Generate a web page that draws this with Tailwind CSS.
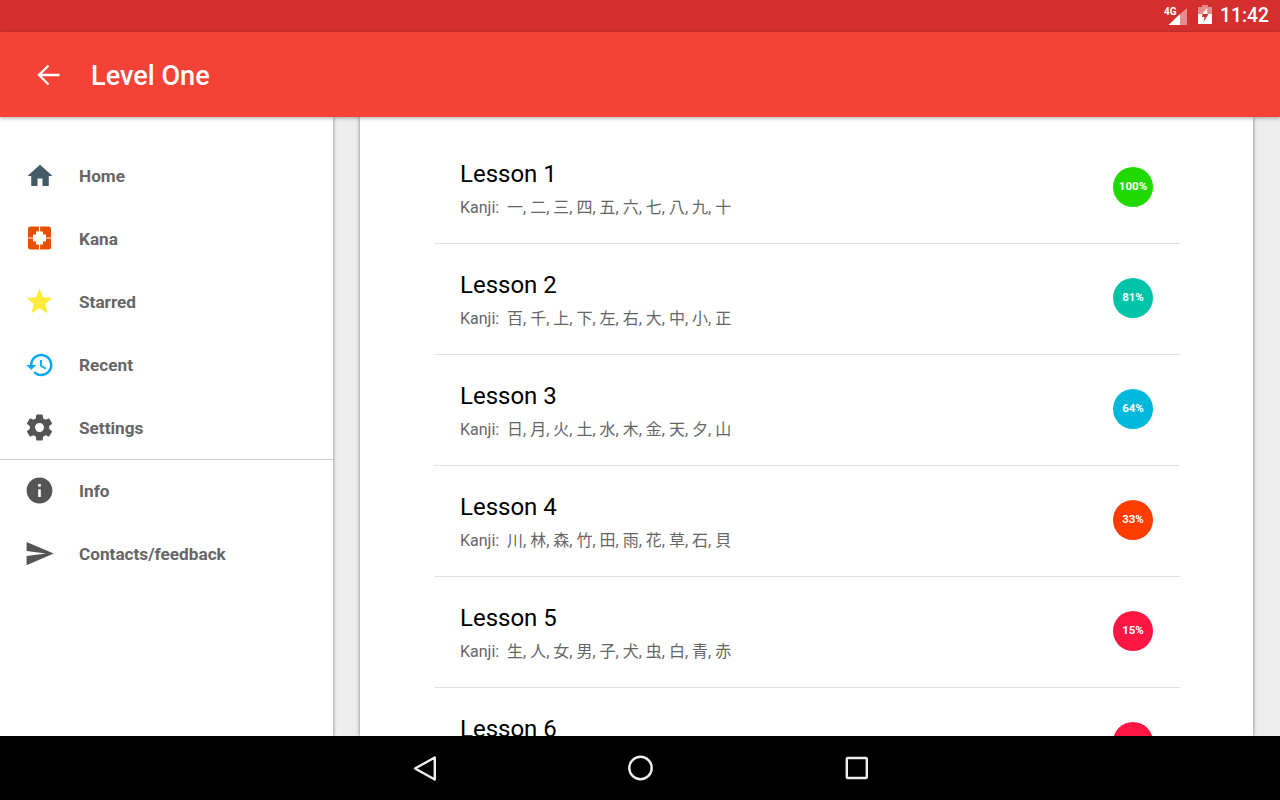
<!DOCTYPE html>
<html lang="en">

<head>
    <meta charset="UTF-8">
    <meta name="viewport" content="width=device-width, initial-scale=1.0">
    <title>Level One</title>
    <script src="https://cdn.jsdelivr.net/npm/@tailwindcss/browser@4"></script>
</head>

<body class="font-['Roboto','Noto_Sans_CJK_JP',sans-serif]">
    <div class="w-[1280px] h-[800px] flex flex-col overflow-hidden bg-[#eeeeee]">
        <!-- status bar -->
        <div class="h-8 shrink-0 bg-[#d32f2f] flex items-center justify-end pr-[11px] text-white">
            <svg class="w-[26px] h-[32px] mr-[9px]" viewBox="0 0 26 32">
                <text x="2" y="15" font-size="10" font-weight="700" fill="#fff" font-family="Roboto">4G</text>
                <path d="M6.500 25 L18 25 L18 14z" fill="#fff" />
                <path d="M18 25 L25 25 L25 8 L18 14z" fill="#fff" fill-opacity="0.45" />
            </svg>
            <svg class="w-[16px] h-[32px] mr-[7px]" viewBox="0 0 16 32">
                <path d="M5 5h6v2h4v17H1V7h4z" fill="#fff" fill-opacity="0.45" />
                <path d="M1 14h14v10H1z" fill="#fff" />
                <path d="M10 8 L5.500 14h5z" fill="#fff" />
                <path d="M5.500 14 L5 17h2.500L6.500 22l5-8z" fill="#d32f2f" />
            </svg>
            <span class="text-[19.3px] font-medium leading-none">11:42</span>
        </div>
        <!-- app bar -->
        <div class="h-[85px] shrink-0 bg-[#f44336] flex items-center pl-[37px] text-white relative z-20 shadow-[0_1px_4px_rgba(0,0,0,0.35)]">
            <svg class="w-6 h-6" viewBox="0 0 24 24" fill="none" stroke="#fff" stroke-width="2.300">
                <path d="M22.500 12H2.500M11.500 2.500 2 12l9.500 9.500" />
            </svg>
            <h1 class="ml-[30px] pt-1 text-[27.1px] font-medium leading-none">Level One</h1>
        </div>
        <div class="flex flex-1 min-h-0">
            <!-- side menu -->
            <nav class="w-[333px] shrink-0 bg-white pt-[27px] relative z-10 shadow-[1px_0_3px_rgba(0,0,0,0.3)] text-[#666666] text-[17.2px] font-bold">
                <a class="h-[63px] flex items-center pl-6 gap-6">
                    <span class="w-[31px] flex justify-center"><svg class="w-[30px] h-[30px]" viewBox="0 0 24 24" fill="#455a64"><path d="M10 20v-6h4v6h5v-8h3L12 3 2 12h3v8z" /></svg></span>
                    <span class="pt-[2px]">Home</span>
                </a>
                <a class="h-[63px] flex items-center pl-6 gap-6">
                    <span class="w-[31px] flex justify-center"><svg class="w-[31px] h-[31px]" viewBox="0 0 31 31">
                        <rect x="4" y="3.500" width="23" height="23" rx="2.500" fill="#e65100" />
                        <path d="M15.500 3.500v23M4 15h23" stroke="#fff" stroke-width="1.200" />
                        <path d="M12 8.500h7v3h3v7h-3v3h-7v-3h-3v-7h3z" fill="#fff" />
                    </svg></span>
                    <span class="pt-[2px]">Kana</span>
                </a>
                <a class="h-[63px] flex items-center pl-6 gap-6">
                    <span class="w-[31px] flex justify-center"><svg class="w-[31px] h-[31px]" viewBox="0 0 24 24" fill="#ffeb3b"><path d="M12 17.270 18.180 21l-1.640-7.030L22 9.240l-7.190-.61L12 2 9.190 8.630 2 9.240l5.460 4.730L5.820 21z" /></svg></span>
                    <span class="pt-[2px]">Starred</span>
                </a>
                <a class="h-[63px] flex items-center pl-6 gap-6">
                    <span class="w-[31px] flex justify-center"><svg class="w-[30px] h-[30px]" viewBox="0 0 24 24" fill="#03a9f4"><path d="M13 3c-4.970 0-9 4.030-9 9H1l3.890 3.890.07.14L9 12H6c0-3.870 3.130-7 7-7s7 3.130 7 7-3.130 7-7 7c-1.930 0-3.680-.79-4.940-2.060l-1.420 1.420C8.270 19.990 10.510 21 13 21c4.970 0 9-4.030 9-9s-4.030-9-9-9zm-1 5v5l4.280 2.540.72-1.210-3.500-2.080V8H12z" /></svg></span>
                    <span class="pt-[2px]">Recent</span>
                </a>
                <a class="h-[63px] flex items-center pl-6 gap-6">
                    <span class="w-[31px] flex justify-center"><svg class="w-[31px] h-[31px]" viewBox="0 0 24 24" fill="#555555"><path d="M19.430 12.980c.04-.32.07-.64.07-.98s-.03-.66-.07-.98l2.110-1.650c.19-.15.24-.42.12-.64l-2-3.460c-.12-.22-.39-.3-.61-.22l-2.490 1c-.52-.4-1.080-.73-1.690-.98l-.38-2.650C14.460 2.180 14.250 2 14 2h-4c-.25 0-.46.18-.49.42l-.38 2.650c-.61.25-1.170.59-1.690.98l-2.490-1c-.23-.09-.49 0-.61.22l-2 3.460c-.13.22-.07.49.12.64l2.110 1.650c-.04.32-.07.65-.07.98s.03.66.07.98l-2.110 1.650c-.19.15-.24.42-.12.64l2 3.460c.12.22.39.3.61.22l2.490-1c.52.4 1.080.73 1.690.98l.38 2.650c.03.24.24.42.49.42h4c.25 0 .46-.18.49-.42l.38-2.650c.61-.25 1.170-.59 1.690-.98l2.490 1c.23.09.49 0 .61-.22l2-3.460c.12-.22.07-.49-.12-.64l-2.110-1.650zM12 15.500c-1.930 0-3.500-1.570-3.500-3.500s1.570-3.500 3.500-3.500 3.500 1.570 3.500 3.500-1.570 3.500-3.500 3.500z" /></svg></span>
                    <span class="pt-[2px]">Settings</span>
                </a>
                <div class="h-px -mb-px bg-[#cccccc]"></div>
                <a class="h-[63px] flex items-center pl-6 gap-6">
                    <span class="w-[31px] flex justify-center"><svg class="w-[31px] h-[31px]" viewBox="0 0 24 24" fill="#555555"><path d="M12 2C6.480 2 2 6.480 2 12s4.480 10 10 10 10-4.480 10-10S17.520 2 12 2zm1 15h-2v-6h2v6zm0-8h-2V7h2v2z" /></svg></span>
                    <span class="pt-[2px]">Info</span>
                </a>
                <a class="h-[63px] flex items-center pl-6 gap-6">
                    <span class="w-[31px] flex justify-center"><svg class="w-[31px] h-[31px]" viewBox="0 0 24 24" fill="#555555"><path d="M2.010 21 23 12 2.010 3 2 10l15 2-15 2z" /></svg></span>
                    <span class="pt-[2px]">Contacts/feedback</span>
                </a>
            </nav>
            <!-- lessons card -->
            <main class="w-[893px] ml-[27px] bg-white shadow-[0_0_4px_rgba(0,0,0,0.5)] pt-4 pl-[74px] pr-[73px] overflow-hidden">
                <div class="h-[111px] pb-[2px] border-b border-[#e0e0e0] flex items-center pl-[26px] pr-[27px] justify-between">
                    <div class="pt-[3px]">
                        <p class="text-[24px] leading-[28px] text-black">Lesson 1</p>
                        <p class="mt-[10px] text-[16px] leading-[20px] text-[#666666]">Kanji:&nbsp; 一, 二, 三, 四, 五, 六, 七, 八, 九, 十</p>
                    </div>
                    <span class="w-10 h-10 rounded-full bg-[#1fd900] flex items-center justify-center text-white text-[11.500px] font-bold">100%</span>
                </div>
                <div class="h-[111px] pb-[2px] border-b border-[#e0e0e0] flex items-center pl-[26px] pr-[27px] justify-between">
                    <div class="pt-[3px]">
                        <p class="text-[24px] leading-[28px] text-black">Lesson 2</p>
                        <p class="mt-[10px] text-[16px] leading-[20px] text-[#666666]">Kanji:&nbsp; 百, 千, 上, 下, 左, 右, 大, 中, 小, 正</p>
                    </div>
                    <span class="w-10 h-10 rounded-full bg-[#00c4a7] flex items-center justify-center text-white text-[11.500px] font-bold">81%</span>
                </div>
                <div class="h-[111px] pb-[2px] border-b border-[#e0e0e0] flex items-center pl-[26px] pr-[27px] justify-between">
                    <div class="pt-[3px]">
                        <p class="text-[24px] leading-[28px] text-black">Lesson 3</p>
                        <p class="mt-[10px] text-[16px] leading-[20px] text-[#666666]">Kanji:&nbsp; 日, 月, 火, 土, 水, 木, 金, 天, 夕, 山</p>
                    </div>
                    <span class="w-10 h-10 rounded-full bg-[#00b8d9] flex items-center justify-center text-white text-[11.500px] font-bold">64%</span>
                </div>
                <div class="h-[111px] pb-[2px] border-b border-[#e0e0e0] flex items-center pl-[26px] pr-[27px] justify-between">
                    <div class="pt-[3px]">
                        <p class="text-[24px] leading-[28px] text-black">Lesson 4</p>
                        <p class="mt-[10px] text-[16px] leading-[20px] text-[#666666]">Kanji:&nbsp; 川, 林, 森, 竹, 田, 雨, 花, 草, 石, 貝</p>
                    </div>
                    <span class="w-10 h-10 rounded-full bg-[#ff3d00] flex items-center justify-center text-white text-[11.500px] font-bold">33%</span>
                </div>
                <div class="h-[111px] pb-[2px] border-b border-[#e0e0e0] flex items-center pl-[26px] pr-[27px] justify-between">
                    <div class="pt-[3px]">
                        <p class="text-[24px] leading-[28px] text-black">Lesson 5</p>
                        <p class="mt-[10px] text-[16px] leading-[20px] text-[#666666]">Kanji:&nbsp; 生, 人, 女, 男, 子, 犬, 虫, 白, 青, 赤</p>
                    </div>
                    <span class="w-10 h-10 rounded-full bg-[#ff1744] flex items-center justify-center text-white text-[11.500px] font-bold">15%</span>
                </div>
                <!-- row runs under the nav bar -->
                <div class="h-[111px] pb-[2px] border-b border-transparent flex items-center pl-[26px] pr-[27px] justify-between">
                    <div class="pt-[3px]">
                        <p class="text-[24px] leading-[28px] text-black">Lesson 6</p>
                        <div class="mt-[10px] h-5"></div>
                    </div>
                    <span class="w-10 h-10 rounded-full bg-[#ff1744]"></span>
                </div>
            </main>
        </div>
        <!-- nav bar -->
        <div class="h-16 shrink-0 bg-black relative z-30 flex items-center justify-center gap-[184px]">
            <svg class="w-8 h-8" viewBox="0 0 32 32" fill="none" stroke="#eeeeee" stroke-width="2.400" stroke-linejoin="round"><path d="M26.800 5.500v22L7 16.500z" /></svg>
            <svg class="w-8 h-8" viewBox="0 0 32 32" fill="none" stroke="#eeeeee" stroke-width="2.400"><circle cx="16.500" cy="16" r="11.200" /></svg>
            <svg class="w-8 h-8" viewBox="0 0 32 32" fill="none" stroke="#eeeeee" stroke-width="2.400" stroke-linejoin="round"><rect x="6.800" y="6" width="20" height="20" rx="1" /></svg>
        </div>
    </div>
</body>

</html>
